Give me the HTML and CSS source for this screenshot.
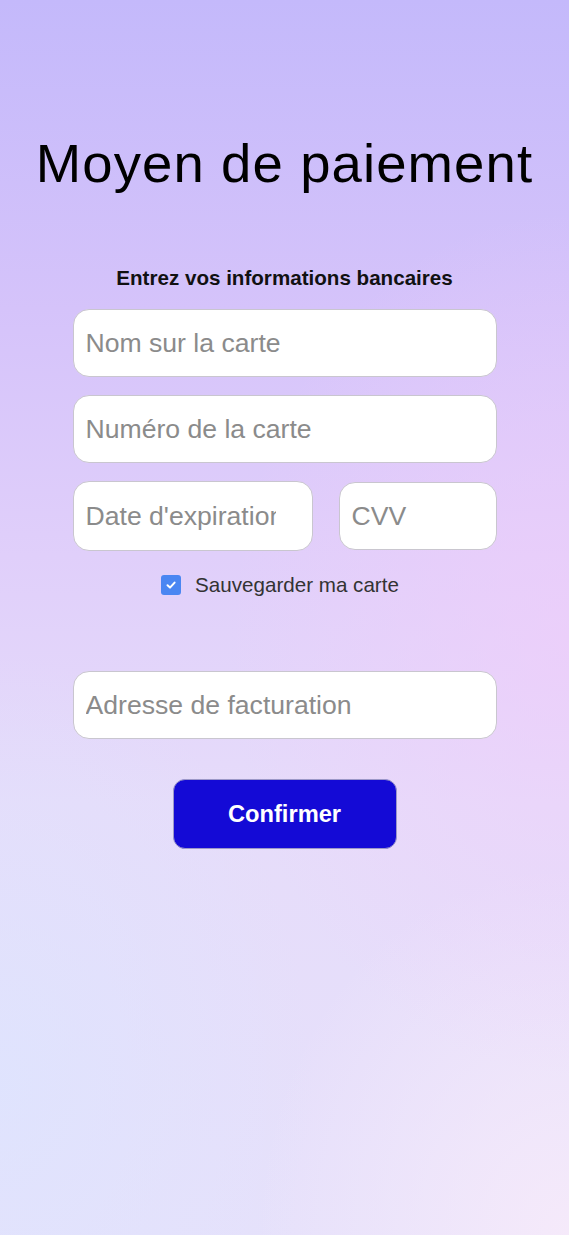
FILE: index.html
```html
<!DOCTYPE html>
<html lang="fr">
<head>
<meta charset="utf-8">
<title>Moyen de paiement</title>
<link rel="stylesheet" href="styles.css">
</head>
<body>
<main class="page">
  <h1 class="title">Moyen de paiement</h1>
  <form class="form">
    <p class="subtitle">Entrez vos informations bancaires</p>
    <input class="field" type="text" placeholder="Nom sur la carte">
    <input class="field field-gap" type="text" placeholder="Numéro de la carte">
    <div class="row field-gap">
      <input class="field field-date" type="text" placeholder="Date d'expiration">
      <input class="field field-cvv" type="text" placeholder="CVV">
    </div>
    <label class="save">
      <span class="check">
        <svg width="12" height="12" viewBox="0 0 12 12"><path d="M2.5 6.3 L5 8.6 L9.6 3.6" fill="none" stroke="#fff" stroke-width="2" stroke-linecap="round" stroke-linejoin="round"/></svg>
      </span>
      <span class="save-text">Sauvegarder ma carte</span>
    </label>
    <input class="field field-address" type="text" placeholder="Adresse de facturation">
    <button class="confirm" type="button">Confirmer</button>
  </form>
</main>
</body>
</html>
```

FILE: styles.css
```css
* { box-sizing: border-box; }
html, body { margin: 0; padding: 0; }
body {
  min-height: 1235px;
  font-family: "Liberation Sans", Arial, sans-serif;
  background:
    radial-gradient(ellipse 60% 35% at 100% 52%, rgba(240, 205, 250, 0.65), rgba(240, 205, 250, 0) 100%),
    radial-gradient(ellipse 55% 30% at 100% 100%, rgba(246, 234, 250, 0.95), rgba(246, 234, 250, 0) 100%),
    radial-gradient(ellipse 55% 35% at 0% 88%, rgba(222, 228, 254, 0.85), rgba(222, 228, 254, 0) 100%),
    linear-gradient(180deg, #c4b9fb 0%, #d5c3fa 25%, #e0cffa 45%, #e6dcfa 65%, #e6e1fb 100%);
}
.page {
  display: flex;
  flex-direction: column;
  align-items: center;
  padding-top: 132px;
}
.title {
  margin: 0;
  font-size: 54.5px;
  line-height: 64px;
  font-weight: 400;
  letter-spacing: 1.1px;
  color: #000;
}
.form {
  width: 424px;
  display: flex;
  flex-direction: column;
  align-items: center;
  margin-top: 70px;
}
.subtitle {
  margin: 0 0 19px;
  font-size: 20.6px;
  line-height: 24px;
  font-weight: 700;
  color: #111;
}
.field {
  display: block;
  width: 424px;
  height: 68px;
  margin: 0;
  padding: 0 12px;
  border: 1px solid #c9c6cf;
  border-radius: 16px;
  background: #fff;
  font-family: "Liberation Sans", Arial, sans-serif;
  font-size: 26.6px;
  color: #333;
  outline: none;
}
.field::placeholder { color: #8b8b8b; opacity: 1; }
.field-gap { margin-top: 18px; }
.row {
  width: 424px;
  display: flex;
  align-items: center;
  justify-content: space-between;
}
.field-date { width: 240px; height: 70px; padding-right: 36px; }
.field-cvv { width: 158px; height: 68px; }
.save {
  margin-top: 23px;
  display: flex;
  align-items: center;
  gap: 14px;
  height: 22px;
  padding-right: 9px;
}
.check {
  width: 20px;
  height: 20px;
  border-radius: 3px;
  background: #4a86f2;
  display: flex;
  align-items: center;
  justify-content: center;
}
.save-text {
  font-size: 20.6px;
  color: #333;
}
.field-address { margin-top: 75px; }
.confirm {
  margin-top: 40px;
  width: 224px;
  height: 70px;
  border: 1px solid #9c98c8;
  border-radius: 12px;
  background: #140ad6;
  color: #fff;
  font-family: "Liberation Sans", Arial, sans-serif;
  font-size: 23.7px;
  font-weight: 700;
  cursor: pointer;
}
```
